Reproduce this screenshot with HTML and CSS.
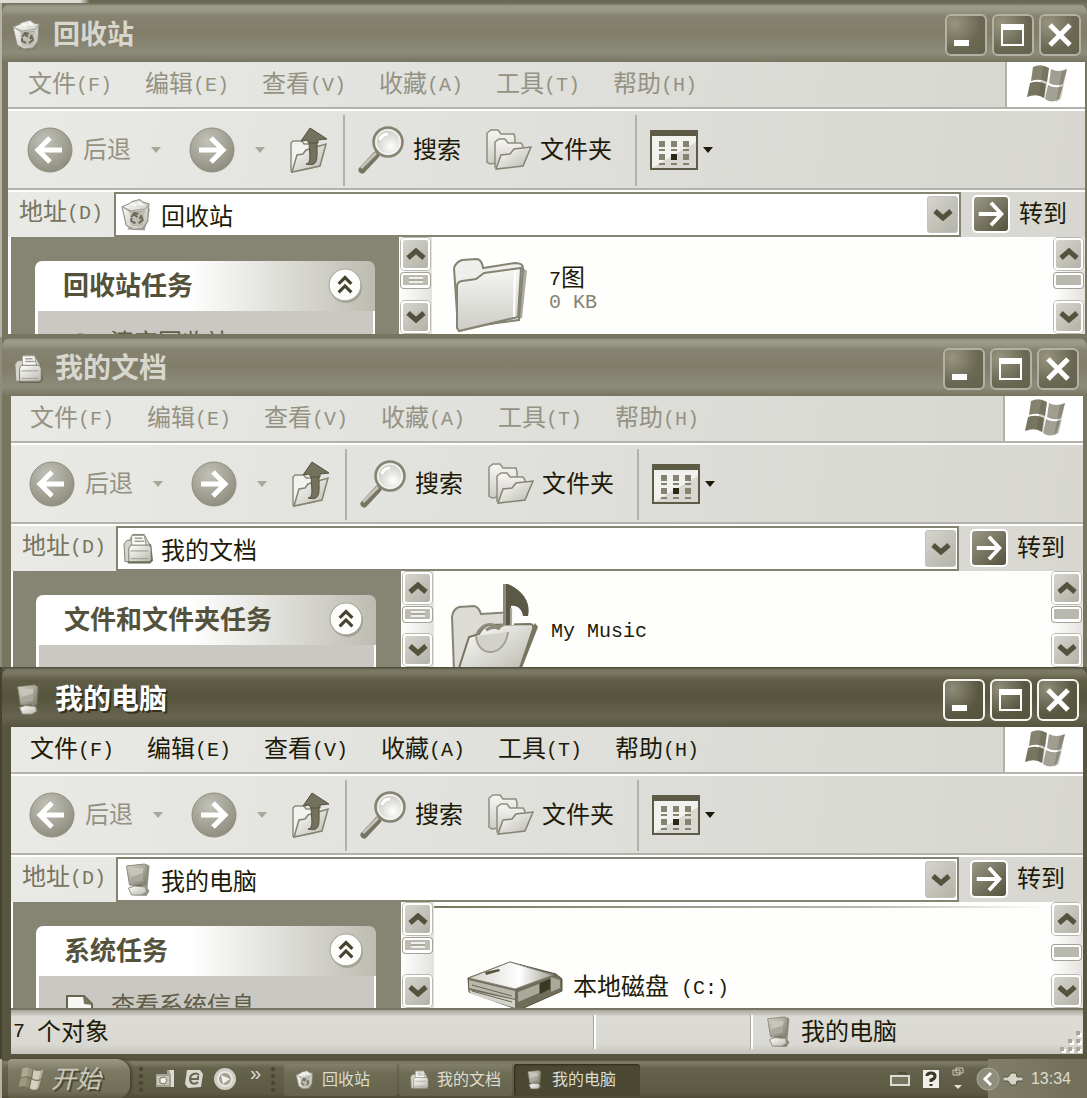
FILE: index.html
```html
<!DOCTYPE html>
<html lang="zh-CN">
<head>
<meta charset="utf-8">
<meta name="viewport" content="width=device-width, initial-scale=1">
<title>我的电脑</title>
<link rel="stylesheet" href="styles.css">
</head>
<body>
<svg class="sprite" width="0" height="0" aria-hidden="true">
  <defs>
    <linearGradient id="g-light" x1="0" y1="0" x2="1" y2="1"><stop offset="0" stop-color="#ffffff"/><stop offset="1" stop-color="#b9b8ae"/></linearGradient>
    <linearGradient id="g-mid" x1="0" y1="0" x2="1" y2="1"><stop offset="0" stop-color="#d6d5cc"/><stop offset="1" stop-color="#7b7968"/></linearGradient>
    <linearGradient id="g-down" x1="0" y1="0" x2="0" y2="1"><stop offset="0" stop-color="#f6f6f3"/><stop offset="1" stop-color="#cdccc6"/></linearGradient>
    <linearGradient id="g-disk" x1="0" y1="0" x2="1" y2="0"><stop offset="0" stop-color="#d4d3cb"/><stop offset=".6" stop-color="#ffffff"/><stop offset="1" stop-color="#a5a497"/></linearGradient>
    <radialGradient id="g-ball" cx=".4" cy=".3" r=".8"><stop offset="0" stop-color="#c3c2b9"/><stop offset=".6" stop-color="#a09f92"/><stop offset="1" stop-color="#898776"/></radialGradient>
    <radialGradient id="g-lens" cx=".6" cy=".65" r=".6"><stop offset="0" stop-color="#ffffff"/><stop offset="1" stop-color="#c9c8c0"/></radialGradient>
  </defs>
  <symbol id="i-bin" viewBox="0 0 30 32">
    <path d="M6 30l17 1 5-20-4-6" fill="#75725f" opacity=".6"/>
    <path d="M1 8l7-3 3-2 7-2 4 3 5 1-1 17-5 7-9 1-7-4z" fill="url(#g-light)" stroke="#8d8b7c"/>
    <path d="M1 8l9 4 14-2 3-5M3 9l8 5 12-2" fill="none" stroke="#a3a296"/>
    <path d="M8 4l5 4 5-5 5 4" fill="#f7f7f4"/>
    <path d="M8 12h15l-2 14-11 1z" fill="#aaa99c" opacity=".5"/>
    <path d="M10 18l3-4 4 1m2 1l2 5-4 3m-3 0l-4-2 0-3M12 15l4 3m4-2l-2 4" fill="none" stroke="#6d6b58" stroke-width="2"/>
  </symbol>
  <symbol id="i-docs" viewBox="0 0 32 32">
    <path d="M3 9l6-4 20 6 2 17-3 3H5z" fill="#6b6955"/>
    <path d="M1 11l3-4h4V4l2-3h12l3 6 3 5v17H2z" fill="#d5d4cc" stroke="#85836f"/>
    <path d="M9 2h13l2 11H9z" fill="#fbfbf9" stroke="#9b998c"/>
    <path d="M12 5h8M12 8h10" stroke="#a09f92" stroke-width="1.500"/>
    <path d="M6 15l2-3h19l2 3v12l-2 2H6z" fill="url(#g-light)" stroke="#7b7967"/>
    <path d="M8 18h18M8 26h18" stroke="#9a988a"/>
  </symbol>
  <symbol id="i-pc" viewBox="0 0 26 34">
    <path d="M6 32l15 1 3-5-2-3 2-22-3-2z" fill="#68654f" opacity=".7"/>
    <path d="M1 3l18-2 3 2-1 18-4 2-13-1z" fill="url(#g-mid)" stroke="#8b8979"/>
    <path d="M4 5h14l-1 13-11 1z" fill="#aaa99c"/>
    <path d="M4 5h14l-1 5-12 4z" fill="#c6c5bb"/>
    <path d="M8 22l8-1 1 4H8z" fill="#77745f"/>
    <path d="M3 25l6-2 11 1 1 5-5 3H6z" fill="url(#g-light)" stroke="#908e7f"/>
  </symbol>
  <symbol id="i-back" viewBox="0 0 46 46">
    <circle cx="23" cy="23" r="22" fill="url(#g-ball)" stroke="#8f8d7e"/>
    <path d="M35 23H13M23 11L11 23l12 12" fill="none" stroke="#fff" stroke-width="5"/>
  </symbol>
  <symbol id="i-fwd" viewBox="0 0 46 46">
    <circle cx="23" cy="23" r="22" fill="url(#g-ball)" stroke="#8f8d7e"/>
    <path d="M10 23h22M22 11l12 12-12 12" fill="none" stroke="#fff" stroke-width="5"/>
  </symbol>
  <symbol id="i-up" viewBox="0 0 38 46">
    <path d="M1 44V16l2-2h9l2 3h8v24L2 45z" fill="#f2f2ef" stroke="#8f8d7e" stroke-width="1.500"/>
    <path d="M2 45l5-17 6-1 3-4 20-6-6 22z" fill="url(#g-light)" stroke="#85836f" stroke-width="1.500"/>
    <path d="M16 37c5-1 4-6 3-22h8c0 17 2 25-11 22z" fill="#74725f" stroke="#54513d"/>
    <path d="M11 14L20 1l17 11-9 1v3h-9l-2-3z" fill="#74725f" stroke="#54513d"/>
  </symbol>
  <symbol id="i-search" viewBox="0 0 48 48">
    <path d="M19 29L5 44" stroke="#77755f" stroke-width="7" stroke-linecap="round"/>
    <path d="M19 27L4 42" stroke="#c5c4ba" stroke-width="3"/>
    <circle cx="31" cy="16" r="14.500" fill="url(#g-lens)" stroke="#858371" stroke-width="2.500"/>
    <circle cx="31" cy="16" r="12" fill="none" stroke="#f4f4f1" stroke-width="1.500"/>
    <path d="M23 14c1-4 4-6 8-6" fill="none" stroke="#fff" stroke-width="3"/>
  </symbol>
  <symbol id="i-folders" viewBox="0 0 46 42">
    <path d="M1 33V4l4-3h7l3 4h13l1 4v22L4 35z" fill="url(#g-down)" stroke="#8f8d7e" stroke-width="1.500"/>
    <path d="M9 38V13l4-3h6l3 4h13l2 3v18z" fill="url(#g-down)" stroke="#8f8d7e" stroke-width="1.500"/>
    <path d="M10 40l5-14 9-1 4-5 17-2-8 19z" fill="url(#g-light)" stroke="#858372" stroke-width="1.500"/>
  </symbol>
  <symbol id="i-view" viewBox="0 0 48 40">
    <rect x="1" y="1" width="46" height="38" fill="#f1f1ee" stroke="#5d5a45" stroke-width="2"/>
    <path d="M2 38h44V12z" fill="#d8d7d1"/>
    <path d="M1 1h46v5H1z" fill="#5d5a45"/>
    <path d="M9 11h6v6H9zm12 0h6v6h-6zm12 0h6v6h-6zM9 24h6v6H9zm24 0h6v6h-6z" fill="#85836f"/>
    <path d="M21 24h6v6h-6z" fill="#2c2a14"/>
    <path d="M9 20h6m6 0h6m6 0h6M9 34h6m6 0h6m6 0h6" stroke="#85836f" stroke-width="2"/>
  </symbol>
  <symbol id="i-flag" viewBox="0 0 42 40">
    <path d="M7 3q8-4 16 1l-2 14q-7-4-16-1z" fill="#858370"/>
    <path d="M25 5q7 4 16 0l-4 15q-7 3-14-1z" fill="#a09e90"/>
    <path d="M4 19q8-3 16 1l-2 14q-7-5-17-1z" fill="#77755f"/>
    <path d="M22 21q7 4 15 1l-4 13q-7 5-14 0z" fill="#a3a194"/>
    <path d="M17 2l6 2-4 30-6-3zM36 7l5-2-6 30-5 3z" fill="#4c4934" opacity=".25"/>
  </symbol>
  <symbol id="i-folder" viewBox="0 0 76 76">
    <path d="M6 74l64-14 5-47-4-3" fill="#8a8878" opacity=".7"/>
    <path d="M6 70L2 10q2-6 8-8l15-1q5 1 6 9l32-5q8 0 8 5l-4 52z" fill="#eeeeeb" stroke="#858372" stroke-width="2"/>
    <path d="M5 70V28q0-4 5-5l14-2 8-6 37-5-3 49L7 73z" fill="url(#g-down)" stroke="#858372" stroke-width="2"/>
    <path d="M63 13l-1 46" stroke="#fff" stroke-width="2"/>
  </symbol>
  <symbol id="i-music" viewBox="0 0 88 88">
    <path d="M4 88L2 34q1-8 7-10l15-1q5 1 7 8l31-2v50z" fill="#dcdbd5" stroke="#858372" stroke-width="2"/>
    <path d="M70 90l18-46-3-4-22 46" fill="#77755f"/>
    <path d="M8 88l11-34 10-3q3-6 9-9l42-1q4 0 3 5L69 88z" fill="url(#g-light)" stroke="#77755f" stroke-width="2"/>
    <path d="M26 53c2 23 29 21 32-4" fill="#d2d1ca" stroke="#a3a195" stroke-width="2"/>
    <path d="M27 51q8-14 21-7l5-2M36 47q8-5 14-1" fill="none" stroke="#8b8979" stroke-width="3"/>
    <path d="M53 1h5c9 4 24 14 20 32h-5c-1-7-6-11-12-10v19h-8z" fill="#5b5945"/>
    <path d="M53 1h3v41h-3z" fill="#8d8b7a"/>
    <path d="M60 42V25l4 1v16z" fill="#a9a799"/>
    <path d="M63 25v17" stroke="#f7f7f4" stroke-width="2"/>
  </symbol>
  <symbol id="i-disk" viewBox="0 0 96 50">
    <path d="M53 49l42-20v-12l-8-4" fill="#8b8978"/>
    <path d="M1 17L43 1l46 12 6 5v12L52 49 2 31z" fill="#6f6d59" stroke="#57543f"/>
    <path d="M2 17L43 1l43 13-38 14z" fill="url(#g-disk)" stroke="#89877a"/>
    <path d="M18 11l14-3 1 2-14 4z" fill="#55523d"/>
    <path d="M2 19l46 11v8L2 27z" fill="#b9b8ad"/>
    <path d="M2 29l46 10v8L4 33z" fill="#d4d3cb"/>
    <path d="M5 30l40 11M5 24l40 11" stroke="#68654f"/>
    <path d="M51 31l21-8v9l-21 9zM84 16l9 3v8l-9 4z" fill="#a9a899"/>
    <path d="M73 22l10-4v10l-10 5z" fill="#3a3722"/>
  </symbol>
  <symbol id="i-collapse" viewBox="0 0 34 34">
    <circle cx="18" cy="18" r="15" fill="#77755f" opacity=".45"/>
    <circle cx="17" cy="16" r="15" fill="#fdfdfb" stroke="#a9a79b"/>
    <path d="M11 15l6-6 6 6M11 23l6-6 6 6" fill="none" stroke="#46432e" stroke-width="3"/>
  </symbol>
  <symbol id="i-chev-up" viewBox="0 0 20 12"><path d="M2 10l8-7 8 7" fill="none" stroke="#54523d" stroke-width="5"/></symbol>
  <symbol id="i-chev-down" viewBox="0 0 20 12"><path d="M2 2l8 7 8-7" fill="none" stroke="#54523d" stroke-width="5"/></symbol>
  <symbol id="i-min" viewBox="0 0 42 42"><path d="M9 26h15v6H9z" fill="#fff"/></symbol>
  <symbol id="i-max" viewBox="0 0 42 42"><path d="M9 10h23v22H9zm2 6v14h19V16z" fill="#fff" fill-rule="evenodd"/></symbol>
  <symbol id="i-close" viewBox="0 0 42 42"><path d="M11 11l20 20M31 11L11 31" stroke="#fff" stroke-width="5"/></symbol>
  <symbol id="i-go" viewBox="0 0 36 36"><path d="M5 18h24M18 6l11 12-11 12" fill="none" stroke="#fff" stroke-width="4"/></symbol>
  <symbol id="i-page" viewBox="0 0 28 30"><path d="M1 1h17l8 8v22H1z" fill="#f7f7f4" stroke="#68654f" stroke-width="2"/><path d="M17 1l9 9-8-1z" fill="#77755f"/></symbol>
  <symbol id="i-desk" viewBox="0 0 20 20"><path d="M1 5h11V1h7v17H1z" fill="#a3a193"/><path d="M14 1h5v17h-3V6z" fill="#dddcd4"/><path d="M2 7h12v9H2z" fill="#c9c8bc"/><path d="M5 9l5-1 2 3-2 4-5-1z" fill="#f1f0ea" stroke="#77755f"/></symbol>
  <symbol id="i-ie" viewBox="0 0 20 20"><path d="M3 1h13l3 4-2 13-13 1-3-4z" fill="#d9d8d0"/><path d="M15 6c-3-3-9-1-9 4s5 6 8 3M7 10h7V7" fill="none" stroke="#6a6752" stroke-width="2"/></symbol>
  <symbol id="i-media" viewBox="0 0 24 24"><circle cx="12" cy="12" r="11" fill="#cfcec4"/><circle cx="12" cy="12" r="7" fill="#a3a193" stroke="#e8e7e0" stroke-width="2"/><path d="M8 8l9 4-7 5z" fill="#f1f0ea"/></symbol>
  <symbol id="i-kbd" viewBox="0 0 20 14"><path d="M8 1h8v4" fill="none" stroke="#3b3823"/><rect x="1" y="4" width="18" height="9" fill="#77755f" stroke="#dddcd2" stroke-width="2"/></symbol>
  <symbol id="i-help" viewBox="0 0 18 20"><path d="M1 1h16v18H1z" fill="#f0efe9"/><path d="M5 7q0-3 4-3t4 3-4 4v2m0 2v2" fill="none" stroke="#3b3823" stroke-width="3"/></symbol>
  <symbol id="i-lang" viewBox="0 0 12 24"><path d="M1 3h7v5H1zM4 1h7v5H4z" fill="none" stroke="#c9c8bb"/><path d="M2 18h8l-4 4z" fill="#e3e2d8"/></symbol>
  <symbol id="i-tray" viewBox="0 0 24 24"><circle cx="12" cy="12" r="11" fill="#8f8d7b" stroke="#aaa897"/><path d="M15 6l-6 6 6 6" fill="none" stroke="#fff" stroke-width="3"/></symbol>
  <symbol id="i-plug" viewBox="0 0 20 14"><path d="M0 5h5l3-4h5l1 4h6v4h-6l-1 4H8L5 9H0z" fill="#d6d5c9" stroke="#57543f"/></symbol>
</svg>

<main class="desktop">
  <section class="window window-bin" aria-label="回收站">
    <header class="titlebar">
      <svg class="title-icon"><use href="#i-bin"/></svg>
      <h1 class="title">回收站</h1>
      <div class="caption-buttons">
        <button class="caption" aria-label="最小化"><svg><use href="#i-min"/></svg></button>
        <button class="caption" aria-label="最大化"><svg><use href="#i-max"/></svg></button>
        <button class="caption" aria-label="关闭"><svg><use href="#i-close"/></svg></button>
      </div>
    </header>
    <div class="menurow">
      <nav class="menu">
        <button>文件<span class="mono">(F)</span></button>
        <button>编辑<span class="mono">(E)</span></button>
        <button>查看<span class="mono">(V)</span></button>
        <button>收藏<span class="mono">(A)</span></button>
        <button>工具<span class="mono">(T)</span></button>
        <button>帮助<span class="mono">(H)</span></button>
      </nav>
      <div class="brand"><svg><use href="#i-flag"/></svg></div>
    </div>
    <div class="toolbar">
      <button class="tool tool-back"><svg class="ball"><use href="#i-back"/></svg>后退<i class="caret"></i></button>
      <button class="tool tool-fwd" aria-label="前进"><svg class="ball"><use href="#i-fwd"/></svg><i class="caret"></i></button>
      <button class="tool tool-up" aria-label="向上"><svg class="up"><use href="#i-up"/></svg></button>
      <button class="tool tool-search"><svg class="lens"><use href="#i-search"/></svg>搜索</button>
      <button class="tool tool-folders"><svg class="folders"><use href="#i-folders"/></svg>文件夹</button>
      <button class="tool tool-view" aria-label="查看方式"><svg class="view"><use href="#i-view"/></svg><i class="caret"></i></button>
    </div>
    <form class="addressbar">
      <label class="address-label" for="addr-bin">地址<span class="mono">(D)</span></label>
      <div class="combo">
        <svg class="combo-icon"><use href="#i-bin"/></svg>
        <input id="addr-bin" class="combo-input" type="text" value="回收站">
        <button type="button" class="combo-drop" aria-label="展开"><svg class="chev"><use href="#i-chev-down"/></svg></button>
      </div>
      <button type="button" class="go"><svg class="go-icon"><use href="#i-go"/></svg>转到</button>
    </form>
    <div class="content">
      <aside class="taskpane">
        <div class="card">
          <div class="card-head"><h2>回收站任务</h2><button class="collapse" aria-label="折叠"><svg><use href="#i-collapse"/></svg></button></div>
          <div class="card-body card-body-low"><a class="task" href="#"><svg class="task-icon"><use href="#i-bin"/></svg>清空回收站</a></div>
        </div>
      </aside>
      <div class="scrollbar"><button aria-label="上"><svg class="chev"><use href="#i-chev-up"/></svg></button><span class="thumb thumb-grip"></span><button class="down" aria-label="下"><svg class="chev"><use href="#i-chev-down"/></svg></button></div>
      <div class="files files-bin">
        <svg class="file-folder"><use href="#i-folder"/></svg>
        <p class="file-name"><span class="mono">7</span>图<small class="mono">0 KB</small></p>
      </div>
      <div class="scrollbar scrollbar-right"><button aria-label="上"><svg class="chev"><use href="#i-chev-up"/></svg></button><span class="thumb"></span><button class="down" aria-label="下"><svg class="chev"><use href="#i-chev-down"/></svg></button></div>
    </div>
  </section>

  <section class="window window-docs" aria-label="我的文档">
    <header class="titlebar">
      <svg class="title-icon"><use href="#i-docs"/></svg>
      <h1 class="title">我的文档</h1>
      <div class="caption-buttons">
        <button class="caption" aria-label="最小化"><svg><use href="#i-min"/></svg></button>
        <button class="caption" aria-label="最大化"><svg><use href="#i-max"/></svg></button>
        <button class="caption" aria-label="关闭"><svg><use href="#i-close"/></svg></button>
      </div>
    </header>
    <div class="menurow">
      <nav class="menu">
        <button>文件<span class="mono">(F)</span></button>
        <button>编辑<span class="mono">(E)</span></button>
        <button>查看<span class="mono">(V)</span></button>
        <button>收藏<span class="mono">(A)</span></button>
        <button>工具<span class="mono">(T)</span></button>
        <button>帮助<span class="mono">(H)</span></button>
      </nav>
      <div class="brand"><svg><use href="#i-flag"/></svg></div>
    </div>
    <div class="toolbar">
      <button class="tool tool-back"><svg class="ball"><use href="#i-back"/></svg>后退<i class="caret"></i></button>
      <button class="tool tool-fwd" aria-label="前进"><svg class="ball"><use href="#i-fwd"/></svg><i class="caret"></i></button>
      <button class="tool tool-up" aria-label="向上"><svg class="up"><use href="#i-up"/></svg></button>
      <button class="tool tool-search"><svg class="lens"><use href="#i-search"/></svg>搜索</button>
      <button class="tool tool-folders"><svg class="folders"><use href="#i-folders"/></svg>文件夹</button>
      <button class="tool tool-view" aria-label="查看方式"><svg class="view"><use href="#i-view"/></svg><i class="caret"></i></button>
    </div>
    <form class="addressbar">
      <label class="address-label" for="addr-docs">地址<span class="mono">(D)</span></label>
      <div class="combo">
        <svg class="combo-icon"><use href="#i-docs"/></svg>
        <input id="addr-docs" class="combo-input" type="text" value="我的文档">
        <button type="button" class="combo-drop" aria-label="展开"><svg class="chev"><use href="#i-chev-down"/></svg></button>
      </div>
      <button type="button" class="go"><svg class="go-icon"><use href="#i-go"/></svg>转到</button>
    </form>
    <div class="content">
      <aside class="taskpane">
        <div class="card">
          <div class="card-head"><h2>文件和文件夹任务</h2><button class="collapse" aria-label="折叠"><svg><use href="#i-collapse"/></svg></button></div>
          <div class="card-body"></div>
        </div>
      </aside>
      <div class="scrollbar"><button aria-label="上"><svg class="chev"><use href="#i-chev-up"/></svg></button><span class="thumb thumb-grip"></span><button class="down" aria-label="下"><svg class="chev"><use href="#i-chev-down"/></svg></button></div>
      <div class="files files-docs">
        <svg class="file-music"><use href="#i-music"/></svg>
        <p class="file-name"><span class="mono">My Music</span></p>
      </div>
      <div class="scrollbar scrollbar-right"><button aria-label="上"><svg class="chev"><use href="#i-chev-up"/></svg></button><span class="thumb"></span><button class="down" aria-label="下"><svg class="chev"><use href="#i-chev-down"/></svg></button></div>
    </div>
  </section>

  <section class="window window-pc active" aria-label="我的电脑">
    <header class="titlebar">
      <svg class="title-icon"><use href="#i-pc"/></svg>
      <h1 class="title">我的电脑</h1>
      <div class="caption-buttons">
        <button class="caption" aria-label="最小化"><svg><use href="#i-min"/></svg></button>
        <button class="caption" aria-label="最大化"><svg><use href="#i-max"/></svg></button>
        <button class="caption" aria-label="关闭"><svg><use href="#i-close"/></svg></button>
      </div>
    </header>
    <div class="menurow">
      <nav class="menu">
        <button>文件<span class="mono">(F)</span></button>
        <button>编辑<span class="mono">(E)</span></button>
        <button>查看<span class="mono">(V)</span></button>
        <button>收藏<span class="mono">(A)</span></button>
        <button>工具<span class="mono">(T)</span></button>
        <button>帮助<span class="mono">(H)</span></button>
      </nav>
      <div class="brand"><svg><use href="#i-flag"/></svg></div>
    </div>
    <div class="toolbar">
      <button class="tool tool-back"><svg class="ball"><use href="#i-back"/></svg>后退<i class="caret"></i></button>
      <button class="tool tool-fwd" aria-label="前进"><svg class="ball"><use href="#i-fwd"/></svg><i class="caret"></i></button>
      <button class="tool tool-up" aria-label="向上"><svg class="up"><use href="#i-up"/></svg></button>
      <button class="tool tool-search"><svg class="lens"><use href="#i-search"/></svg>搜索</button>
      <button class="tool tool-folders"><svg class="folders"><use href="#i-folders"/></svg>文件夹</button>
      <button class="tool tool-view" aria-label="查看方式"><svg class="view"><use href="#i-view"/></svg><i class="caret"></i></button>
    </div>
    <form class="addressbar">
      <label class="address-label" for="addr-pc">地址<span class="mono">(D)</span></label>
      <div class="combo">
        <svg class="combo-icon"><use href="#i-pc"/></svg>
        <input id="addr-pc" class="combo-input" type="text" value="我的电脑">
        <button type="button" class="combo-drop" aria-label="展开"><svg class="chev"><use href="#i-chev-down"/></svg></button>
      </div>
      <button type="button" class="go"><svg class="go-icon"><use href="#i-go"/></svg>转到</button>
    </form>
    <div class="content">
      <aside class="taskpane">
        <div class="card">
          <div class="card-head"><h2>系统任务</h2><button class="collapse" aria-label="折叠"><svg><use href="#i-collapse"/></svg></button></div>
          <div class="card-body"><a class="task" href="#"><svg class="task-icon"><use href="#i-page"/></svg>查看系统信息</a></div>
        </div>
      </aside>
      <div class="scrollbar"><button aria-label="上"><svg class="chev"><use href="#i-chev-up"/></svg></button><span class="thumb thumb-grip"></span><button class="down" aria-label="下"><svg class="chev"><use href="#i-chev-down"/></svg></button></div>
      <div class="files files-pc">
        <svg class="file-disk"><use href="#i-disk"/></svg>
        <p class="file-name">本地磁盘<span class="mono"> (C:)</span></p>
      </div>
      <div class="scrollbar scrollbar-right"><button aria-label="上"><svg class="chev"><use href="#i-chev-up"/></svg></button><span class="thumb thumb-far"></span><button class="down" aria-label="下"><svg class="chev"><use href="#i-chev-down"/></svg></button></div>
    </div>
    <footer class="statusbar">
      <span class="status-count"><span class="mono">7 </span>个对象</span>
      <span class="status-blank"></span>
      <span class="status-zone"><svg class="status-icon"><use href="#i-pc"/></svg>我的电脑</span>
      <svg class="grip" viewBox="0 0 24 24"><path d="M17 1h4v4h-4zM9 9h4v4H9zm8 0h4v4h-4zM1 17h4v4H1zm8 0h4v4H9zm8 0h4v4h-4z" fill="#fff" transform="translate(2 2)"/><path d="M17 1h4v4h-4zM9 9h4v4H9zm8 0h4v4h-4zM1 17h4v4H1zm8 0h4v4H9zm8 0h4v4h-4z" fill="#a9a79a"/></svg>
    </footer>
  </section>
</main>

<footer class="taskbar">
  <button class="start"><svg class="start-flag"><use href="#i-flag"/></svg>开始</button>
  <span class="dots"></span>
  <div class="quick">
    <svg class="q"><use href="#i-desk"/></svg>
    <svg class="q"><use href="#i-ie"/></svg>
    <svg class="q q-media"><use href="#i-media"/></svg>
  </div>
  <span class="more">»</span>
  <span class="dots"></span>
  <div class="tasks">
    <button class="taskbtn"><svg class="task-mini"><use href="#i-bin"/></svg>回收站</button>
    <button class="taskbtn"><svg class="task-mini"><use href="#i-docs"/></svg>我的文档</button>
    <button class="taskbtn current"><svg class="task-mini"><use href="#i-pc"/></svg>我的电脑</button>
  </div>
  <div class="indicators">
    <svg class="n-kbd"><use href="#i-kbd"/></svg>
    <svg class="n-help"><use href="#i-help"/></svg>
    <svg class="n-lang"><use href="#i-lang"/></svg>
  </div>
  <div class="tray">
    <svg class="n-tray"><use href="#i-tray"/></svg>
    <svg class="n-plug"><use href="#i-plug"/></svg>
    <time class="clock">13:34</time>
  </div>
</footer>
</body>
</html>
```
FILE: styles.css
```css
* { box-sizing: border-box; }

:root {
  --line: #b3b2a9;
  --face: linear-gradient(100deg, #e9e9e6, #dfdfdb 50%, #d7d6d0);
  --frame: #77745f;
}

body {
  margin: 0;
  min-height: 100vh;
  display: flex;
  flex-direction: column;
  background: #6a6752;
  font-family: "Liberation Sans", "Noto Sans CJK SC", sans-serif;
  font-size: 24px;
  line-height: 28px;
  color: #1d1b08;
}

button, input {
  font: inherit;
  color: inherit;
  background: none;
  border: 0;
  padding: 0;
  margin: 0;
}

h1, h2, p { margin: 0; }
svg { display: block; flex: none; }
.mono { font-family: "Liberation Mono", monospace; font-size: 20px; line-height: 20px; vertical-align: 1px; white-space: pre; }

.desktop {
  flex: 1;
  display: flex;
  flex-direction: column;
  padding-top: 3px;
  background: linear-gradient(90deg, #deddd6 0, #deddd6 80px, #6a6752 90px) no-repeat 0 0 / 100% 3px;
}

/* windows */
.window {
  display: flex;
  flex-direction: column;
  background: var(--frame);
  border-left: 2px solid #8f8d7c;
}
.window-bin { padding: 0 2px 3px 6px; border-left-color: #b5b3a6; }
.window-docs, .window-pc { padding: 0 4px 0 9px; }
.active { --frame: #57543f; flex: 1; padding-bottom: 5px; border-left-color: #454230; }

.titlebar {
  display: flex;
  align-items: center;
  height: 59px;
  margin: 0 -2px 0 -6px;
  padding: 5px 6px 0 10px;
  border-radius: 10px 10px 0 0;
  background: linear-gradient(#6b6854 0, #9b9988 3px, #9a9887 7px, #858370 13px, #807d69 30px, #8d8b7a 50px, #77745f);
}
.window-docs .titlebar, .window-pc .titlebar { margin: 0 -4px 0 -9px; padding-right: 8px; padding-left: 12px; }
.active .titlebar {
  height: 60px;
  background: linear-gradient(#4a4733 0, #7b7965 3px, #78755f 7px, #605d47 13px, #57543e 30px, #66634e 50px, #57543f);
}
.title-icon { width: 30px; height: 32px; }
.title {
  flex: 1;
  margin-left: 11px;
  font-size: 27px;
  line-height: 32px;
  font-weight: 700;
  color: #d8d7cd;
}
.window-docs .title, .window-pc .title { font-size: 28px; }
.active .title { color: #fff; text-shadow: 2px 2px #34311d; }
.caption-buttons { display: flex; gap: 5px; }
.caption {
  width: 42px;
  height: 42px;
  border: 2px solid #b3b1a4;
  border-radius: 6px;
  background: radial-gradient(circle at 20% 20%, #97957f, #6a6752 60%, #65624c);
}
.caption svg { width: 42px; height: 42px; margin: -2px; }
.active .caption { border-color: #f6f5ee; background: radial-gradient(circle at 20% 20%, #8f8d7a, #5a5742 60%, #57543e); }

/* menu */
.menurow {
  display: flex;
  height: 49px;
  border-bottom: 2px solid #fff;
  background: var(--face);
  box-shadow: inset 0 -2px var(--line);
}
.menu {
  flex: 1;
  display: flex;
  gap: 33px;
  padding: 8px 0 0 20px;
  align-items: flex-start;
}
.menu button { white-space: nowrap; line-height: 28px; color: #949283; }
.active .menu button { color: #1d1b08; }
.window-docs .menu, .window-pc .menu { padding-left: 19px; }
.brand {
  width: 80px;
  height: 45px;
  padding: 2px 0 0 19px;
  border-left: 2px solid var(--line);
  background: #fff;
}
.brand svg { width: 42px; height: 40px; }

/* toolbar */
.toolbar {
  display: flex;
  align-items: stretch;
  height: 81px;
  padding: 4px 0 4px 19px;
  border-bottom: 2px solid #fff;
  background: var(--face);
  box-shadow: inset 0 -2px var(--line);
}
.window-docs .toolbar, .window-pc .toolbar { padding-left: 18px; }
.tool { display: flex; align-items: center; white-space: nowrap; padding-bottom: 2px; }
.caret {
  width: 0;
  border: 5px solid transparent;
  border-top: 6px solid #1d1b08;
  border-bottom: 0;
}
.ball { width: 46px; height: 46px; }
.up { width: 38px; height: 46px; }
.lens { width: 48px; height: 48px; margin-right: 8px; }
.folders { width: 46px; height: 42px; margin-right: 8px; }
.view { width: 48px; height: 40px; }
.tool-back { color: #949283; width: 162px; }
.tool-back .ball { margin-right: 10px; }
.tool-back .caret, .tool-fwd .caret { border-top-color: #a9a79a; margin-left: 20px; }
.tool-fwd { width: 101px; }
.tool-up { width: 55px; border-right: 2px solid var(--line); }
.tool-search { width: 129px; margin-left: 12px; }
.tool-folders { width: 151px; border-right: 2px solid var(--line); }
.tool-view { margin-left: 13px; }
.tool-view .caret { margin-left: 5px; }

/* address bar */
.addressbar { display: flex; height: 45px; background: var(--face); }
.address-label { width: 106px; padding: 6px 0 0 11px; color: #77755f; white-space: nowrap; }
.window-docs .address-label, .window-pc .address-label { width: 105px; }
.combo {
  flex: 1;
  min-width: 0;
  display: flex;
  align-items: center;
  border: 2px solid #858372;
  background: #fff;
}
.combo-icon { width: 31px; height: 34px; margin: 0 9px 0 5px; }
.combo-input { flex: 1; min-width: 0; height: 36px; outline: 0; }
.window-docs .combo-icon, .window-pc .combo-icon { margin-right: 7px; }
.combo-drop, .scrollbar button {
  display: grid;
  place-items: center;
  border-radius: 4px;
  background: linear-gradient(135deg, #d6d5ce, #b3b2a8);
}
.combo-drop { width: 31px; height: 37px; margin: 0 1px; box-shadow: inset 0 0 0 1px #c4c3ba; }
.chev { width: 20px; height: 12px; }
.go { display: flex; align-items: center; width: 124px; padding: 0 0 2px 11px; white-space: nowrap; }
.go-icon {
  width: 38px;
  height: 38px;
  margin-right: 9px;
  border: 2px solid #fff;
  border-radius: 5px;
  background: linear-gradient(135deg, #9a9886, #54513c);
}

/* content */
.content { display: flex; height: 97px; overflow: hidden; background: #fefefd; }
.window-docs .content { height: 96px; }
.active .content { flex: 1 0 108px; height: 108px; border-bottom: 2px solid #77755f; }
.taskpane { width: 391px; flex: none; padding: 24px 0 0 24px; border-left: 3px solid #fff; background: #868472; }
.window-docs .taskpane, .window-pc .taskpane { width: 390px; padding-left: 23px; border-left-width: 2px; }
.card { width: 340px; }
.card-head {
  display: flex;
  align-items: center;
  justify-content: space-between;
  height: 50px;
  padding: 0 12px 0 28px;
  border-radius: 7px 7px 0 0;
  background: linear-gradient(90deg, #fff 45%, #bdbcb2);
}
.card-head h2 { font-size: 26px; line-height: 32px; color: #55523c; }
.collapse svg { width: 36px; height: 36px; }
.card-body { height: 130px; padding: 16px 0 0 27px; border: solid #fff; border-width: 0 2px 0 3px; background: #c9c8c2; }
.card-body-low { padding-top: 18px; }
.task { display: flex; align-items: flex-start; gap: 17px; color: #605d48; text-decoration: none; }
.task-icon { width: 28px; height: 30px; margin-top: 3px; }

.scrollbar {
  flex: none;
  display: flex;
  flex-direction: column;
  width: 33px;
  padding: 1px 2px 1px 2px;
  background: linear-gradient(90deg, #fff, #e3e2dd);
}
.scrollbar button { height: 32px; border: 2px solid #fff; box-shadow: 0 0 0 1px #bab9af; }
.scrollbar .down { margin-top: auto; }
.thumb { height: 15px; margin-top: 3px; border: 2px solid #fff; border-bottom-width: 3px; border-radius: 3px; background: #b9b8ae; box-shadow: 0 0 0 1px #a5a397; }
.thumb-grip { background: linear-gradient(#b9b8ae 2px, #f1f0ec 2px, #f1f0ec 4px, #aaa99c 4px, #aaa99c 6px, #f1f0ec 6px, #f1f0ec 8px, #b9b8ae 8px) center / 14px 10px no-repeat #bdbcb3; }
.thumb-far { margin-top: 10px; }

.files { flex: 1; min-width: 0; display: flex; align-items: flex-start; }
.files-bin { padding: 21px 0 0 20px; }
.files-docs { padding: 12px 0 0 16px; }
.files-pc {
  padding: 59px 0 0 33px;
  background: linear-gradient(90deg, #77755f, #b9b8ae 70%, #fff) no-repeat 0 4px / 100% 2px;
}
.file-folder { width: 76px; height: 76px; }
.file-music { width: 88px; height: 88px; }
.file-disk { width: 96px; height: 50px; }
.file-name { margin: 6px 0 0 21px; white-space: nowrap; }
.file-name small { display: block; color: #858372; line-height: 22px; }
.files-docs .file-name { margin: 33px 0 0 13px; }
.files-pc .file-name { margin: 12px 0 0 10px; }

/* status bar */
.statusbar {
  display: flex;
  align-items: center;
  height: 44px;
  background: linear-gradient(#a9a79a, #dcdbd6 7px, #d9d8d2 34px, #c6c5bd);
}
.statusbar > span { display: flex; align-items: center; height: 34px; }
.status-count { width: 583px; padding-left: 2px; }
.status-blank { width: 157px; }
.status-blank, .status-zone { border-left: 2px solid #fff; box-shadow: -1px 0 #a9a79a; }
.status-zone { flex: 1; padding-left: 13px; }
.status-icon { width: 26px; height: 32px; margin-right: 9px; }
.grip { width: 24px; height: 24px; align-self: flex-end; }

/* taskbar */
.taskbar {
  display: flex;
  align-items: center;
  height: 40px;
  padding-left: 6px;
  border-left: 2px solid #b5b3a6;
  background: linear-gradient(#46432f, #807e69 3px, #66634d 9px, #5c5943 34px, #4c4934);
  color: #dddcd0;
  font-size: 16px;
}
.start {
  display: flex;
  align-items: center;
  align-self: stretch;
  width: 122px;
  padding-left: 10px;
  border-radius: 4px 14px 14px 4px;
  background: linear-gradient(#9b9985, #7b7963 30%, #737059 80%, #5b5842);
  box-shadow: 2px 0 3px #44412c;
  color: #c9c8ba;
  font-size: 25px;
  font-style: italic;
  text-shadow: 2px 2px #4c4934;
}
.start-flag { width: 26px; height: 26px; margin-right: 7px; }
.start-flag { filter: brightness(1.3); }
.dots { width: 8px; height: 26px; margin-left: 8px; background: radial-gradient(circle at 3px 3px, #46432e 1px, transparent 3px) 0 0 / 7px 7px; }
.quick { display: flex; align-items: center; gap: 9px; margin-left: 9px; }
.q { width: 20px; height: 20px; }
.q-media { width: 24px; height: 24px; }
.more { width: 12px; margin-left: 13px; font-size: 20px; line-height: 20px; align-self: flex-start; margin-top: 4px; }
.tasks { display: flex; gap: 2px; margin-left: 6px; align-self: stretch; padding: 5px 0 3px; }
.taskbtn {
  display: flex;
  align-items: center;
  width: 113px;
  padding-left: 11px;
  border-radius: 3px;
  white-space: nowrap;
  background: linear-gradient(#838069, #6f6c56 30%, #66634d);
}
.taskbtn.current { width: 126px; background: #4a4732; box-shadow: inset 1px 1px 2px #2f2c18; }
.task-mini { width: 20px; height: 20px; margin-right: 7px; }
.indicators { display: flex; align-items: center; gap: 12px; margin-left: auto; padding-right: 12px; }
.n-kbd { width: 20px; height: 14px; }
.n-help { width: 18px; height: 20px; }
.n-lang { width: 12px; height: 24px; }
.tray {
  display: flex;
  align-items: center;
  align-self: stretch;
  padding-right: 16px;
  background: linear-gradient(90deg, transparent 12px, #807e69 12px, #716e58);
}
.n-tray { width: 24px; height: 24px; }
.n-plug { width: 20px; height: 14px; margin: 0 8px 0 3px; }
.clock { line-height: 20px; }
```
